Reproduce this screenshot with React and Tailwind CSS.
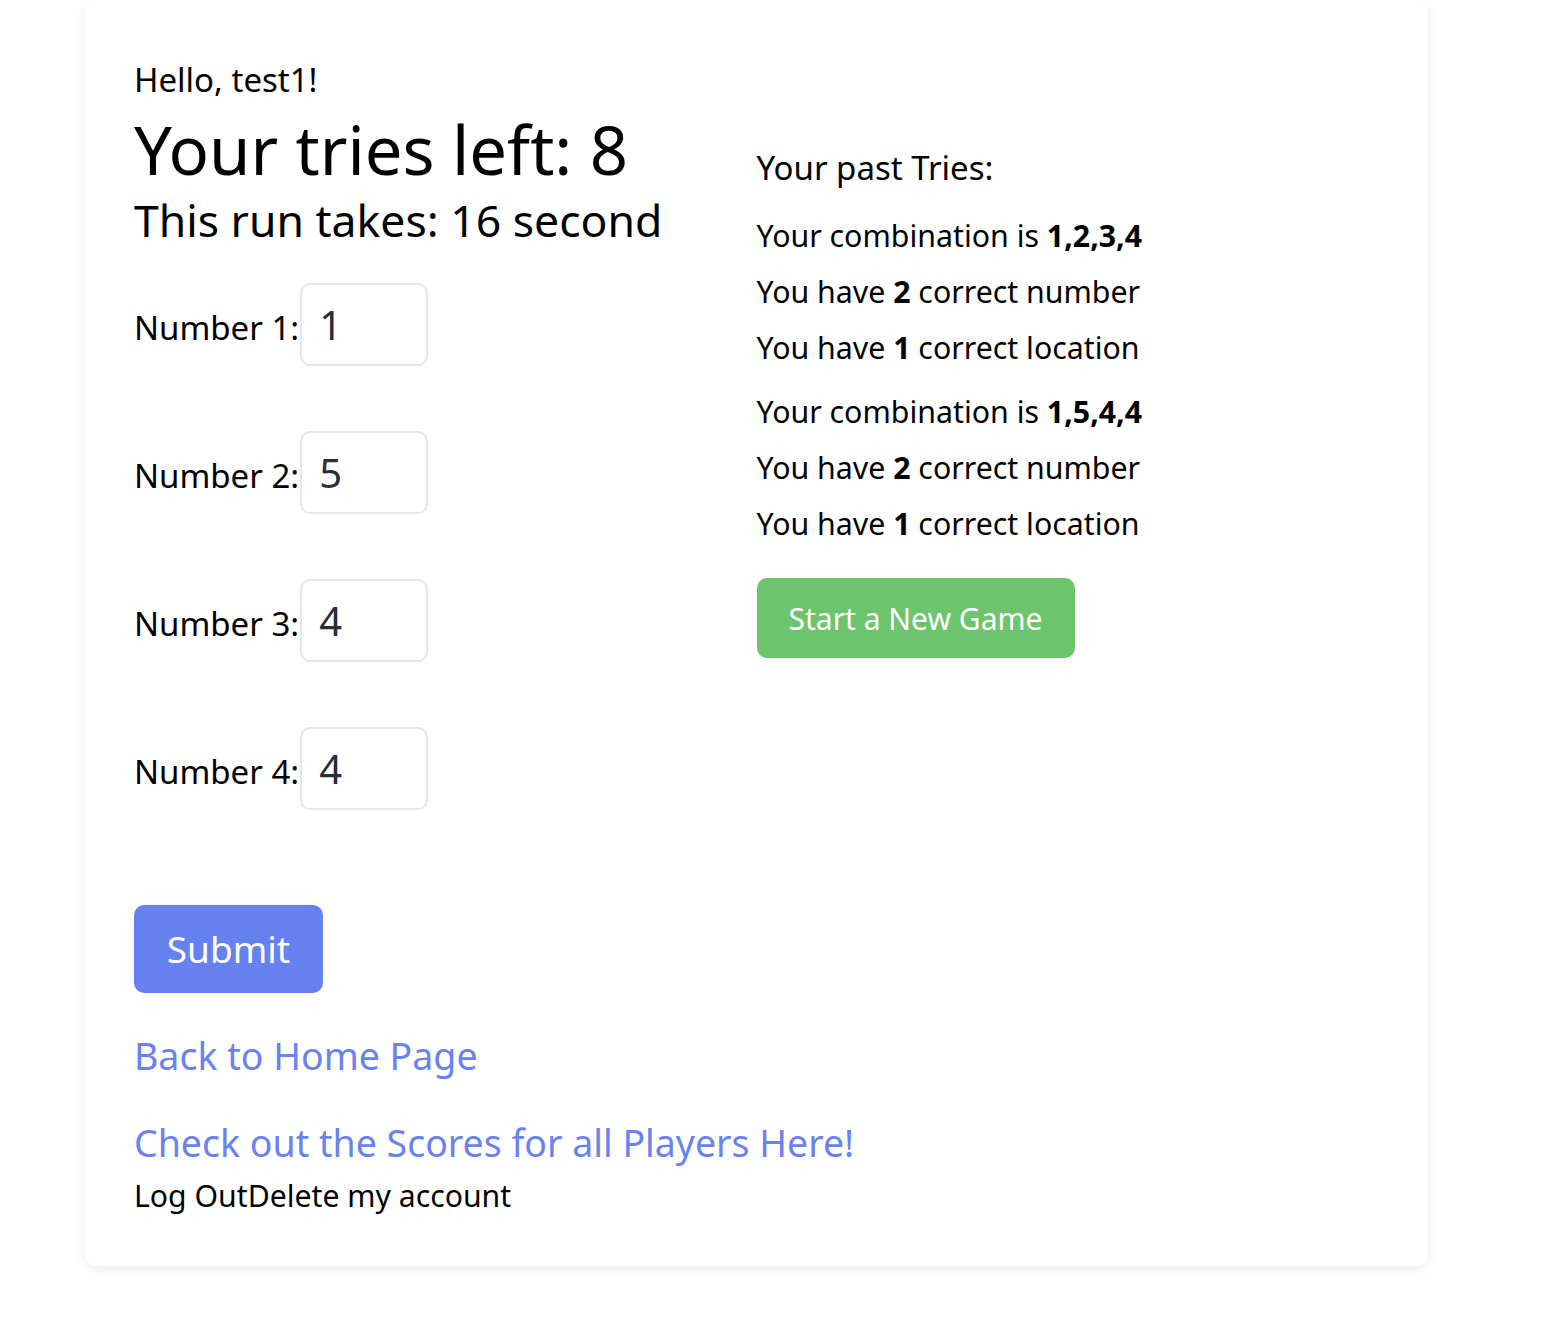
import React, { useState } from 'react';

const pastTries = [
  { combo: '1,2,3,4', numbers: 2, locations: 1 },
  { combo: '1,5,4,4', numbers: 2, locations: 1 },
];

const App = () => {
  const [values, setValues] = useState(['1', '5', '4', '4']);

  const updateValue = (idx, v) => {
    const next = [...values];
    next[idx] = v;
    setValues(next);
  };

  return (
    <div className="min-h-screen bg-white text-black" style={{ fontFamily: '"Noto Sans", "Open Sans", sans-serif' }}>
      <div className="ml-[85px] w-[1343px] bg-white rounded-xl shadow-[0_4px_12px_rgba(0,0,0,0.08)] px-[49px] pt-[58px] pb-[50px]">
        <div className="grid grid-cols-2">
          {/* left: the guess form */}
          <div>
            <p className="text-[33px] leading-[44px]">Hello, test1!</p>
            <h1 className="text-[67px] leading-[72px] mt-[11px]">Your tries left: 8</h1>
            <h2 className="text-[44.5px] leading-[56px] mt-[7px] whitespace-nowrap">This run takes: 16 second</h2>

            <form className="mt-[35px]" onSubmit={(e) => e.preventDefault()}>
              {values.map((v, i) => (
                <div key={i} className="text-[33px] mb-[65px]">
                  <label>
                    Number {i + 1}:
                    <input
                      type="text"
                      value={v}
                      onChange={(e) => updateValue(i, e.target.value)}
                      className="ml-[1px] w-[128px] h-[83px] border-2 border-[#e6e6ea] rounded-[10px] px-[17px] text-[40px] text-[#2b2b3a] outline-none"
                    />
                  </label>
                </div>
              ))}
              <button
                type="submit"
                className="mt-[30px] w-[189px] h-[88px] rounded-[10px] bg-[#6582f0] text-white text-[37px]"
              >
                Submit
              </button>
            </form>

            <a href="#" className="block mt-[38px] text-[37.5px] leading-[50px] text-[#6a82f0] whitespace-nowrap">Back to Home Page</a>
            <a href="#" className="block mt-[37px] text-[37.5px] leading-[50px] text-[#6a82f0] whitespace-nowrap">Check out the Scores for all Players Here!</a>
            <div className="mt-[8px] text-[30.2px] leading-[40px] whitespace-nowrap">
              <a href="#">Log Out</a>
              <a href="#">Delete my account</a>
            </div>
          </div>

          {/* right: past tries */}
          <div className="pt-[88px]">
            <h3 className="text-[33px] leading-[44px]">Your past Tries:</h3>
            <div className="mt-[18px]">
              {pastTries.map((t, i) => (
                <div key={i} className="text-[30.3px] leading-[56px] mb-[8px] whitespace-nowrap">
                  <p>Your combination is <b>{t.combo}</b></p>
                  <p>You have <b>{t.numbers}</b> correct number</p>
                  <p>You have <b>{t.locations}</b> correct location</p>
                </div>
              ))}
            </div>
            <button className="mt-[18px] w-[318px] h-[80px] rounded-[10px] bg-[#6cc46c] text-white text-[30px]">
              Start a New Game
            </button>
          </div>
        </div>
      </div>
    </div>
  );
};

export default App;
